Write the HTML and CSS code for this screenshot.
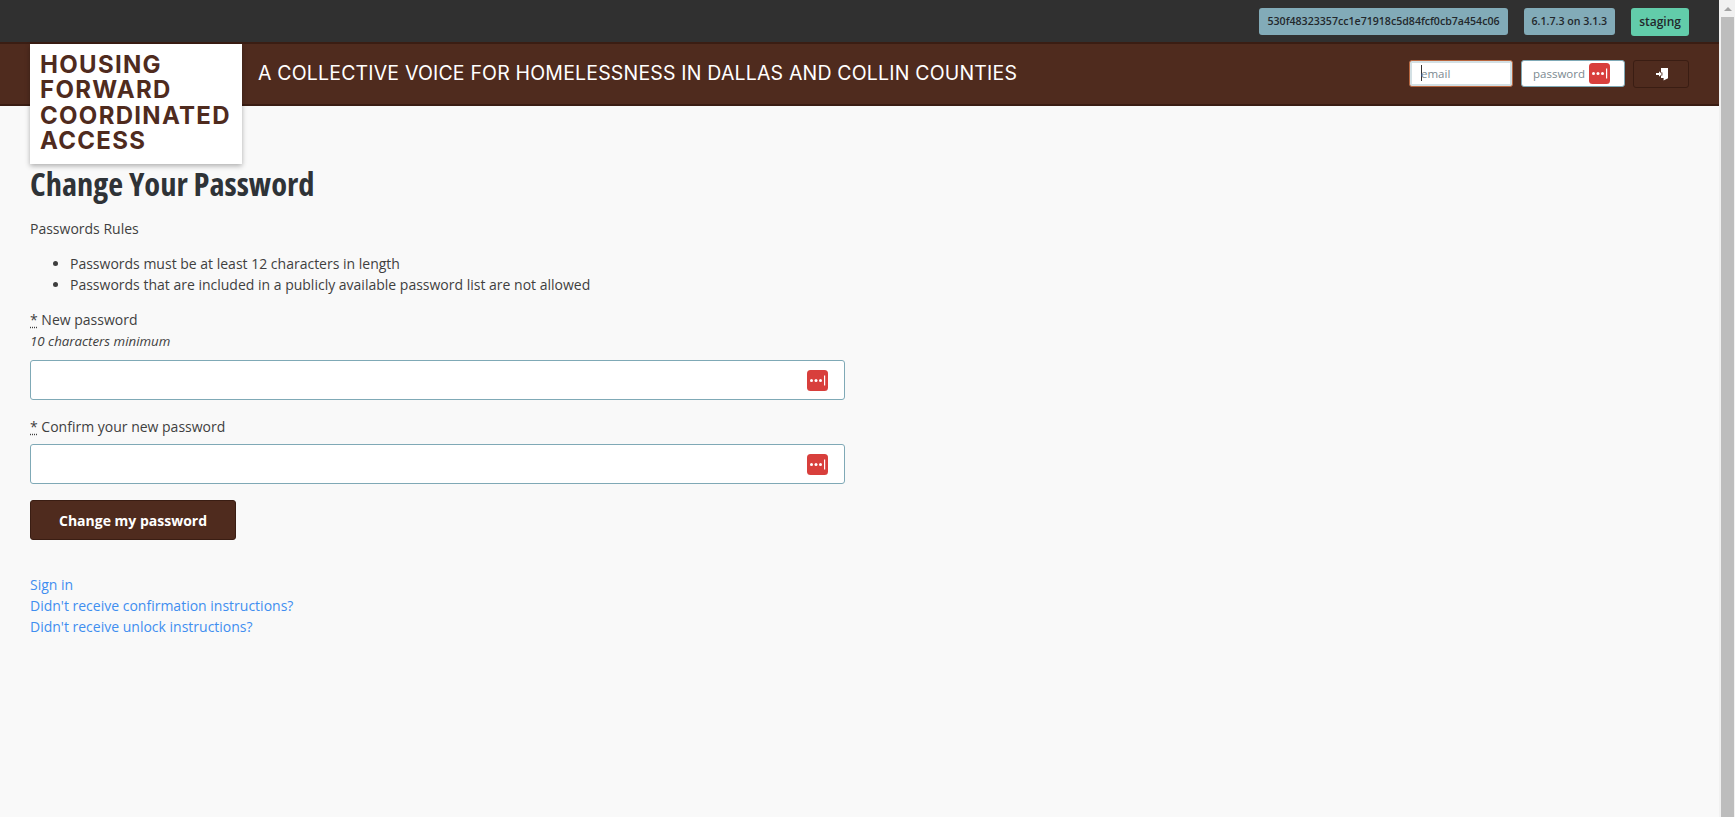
FILE: index.html
```html
<!DOCTYPE html>
<html lang="en">
<head>
<meta charset="utf-8">
<title>Change Your Password</title>
<link rel="stylesheet" href="styles.css">
</head>
<body>
<div class="window">
  <div class="page">
    <div class="topbar">
      <span class="badge badge-info">530f48323357cc1e71918c5d84fcf0cb7a454c06</span>
      <span class="badge badge-info">6.1.7.3 on 3.1.3</span>
      <span class="badge badge-env">staging</span>
    </div>
    <header class="brandbar">
      <div class="logo">HOUSING<br>FORWARD<br>COORDINATED<br>ACCESS</div>
      <div class="tagline">A COLLECTIVE VOICE FOR HOMELESSNESS IN DALLAS AND COLLIN COUNTIES</div>
      <form class="signin">
        <div class="mini-input mini-focus"><span class="caret"></span><span class="ph">email</span></div>
        <div class="mini-input mini-pass">
          <span class="ph">password</span>
          <svg class="lp" viewBox="0 0 21 21"><use href="#lp-icon"/></svg>
        </div>
        <button type="button" class="signin-btn" aria-label="Sign in">
          <svg class="door" viewBox="-1 0 14 14"><path fill="#fff" d="M6 1h7v10.2L8.6 13.5V11H6V8.6h1.4V5.4H6z"/><path fill="#fff" d="M1 6h3V4.2L7 7 4 9.800V8H1z"/></svg>
        </button>
      </form>
    </header>
    <main class="content">
      <h1 class="title">Change Your Password</h1>
      <p class="rules-title">Passwords Rules</p>
      <ul class="rules">
        <li>Passwords must be at least 12 characters in length</li>
        <li>Passwords that are included in a publicly available password list are not allowed</li>
      </ul>
      <form class="pw-form">
        <div class="field">
          <label class="label"><abbr class="req">*</abbr> New password</label>
          <div class="hint">10 characters minimum</div>
          <div class="input"><svg class="lp" viewBox="0 0 21 21"><use href="#lp-icon"/></svg></div>
        </div>
        <div class="field">
          <label class="label"><abbr class="req">*</abbr> Confirm your new password</label>
          <div class="input"><svg class="lp" viewBox="0 0 21 21"><use href="#lp-icon"/></svg></div>
        </div>
        <button type="button" class="submit">Change my password</button>
      </form>
      <nav class="links">
        <a href="#">Sign in</a>
        <a href="#">Didn't receive confirmation instructions?</a>
        <a href="#">Didn't receive unlock instructions?</a>
      </nav>
    </main>
  </div>
  <div class="scrollbar">
    <div class="arrow"></div>
    <div class="thumb"></div>
  </div>
</div>
<svg class="defs" width="0" height="0">
  <symbol id="lp-icon" viewBox="0 0 21 21">
    <rect width="21" height="21" rx="3.500" fill="#d83f3c"/>
    <circle cx="4.500" cy="10.500" r="1.500" fill="#fff"/>
    <circle cx="9" cy="10.500" r="1.500" fill="#fff"/>
    <circle cx="13.500" cy="10.500" r="1.500" fill="#fff"/>
    <rect x="17" y="5.500" width="1.200" height="10" fill="#fff"/>
  </symbol>
</svg>
</body>
</html>
```
FILE: styles.css
```css
* { box-sizing: border-box; }
html, body { margin: 0; height: 100%; overflow: hidden; }
body {
  font-family: "Open Sans", "Liberation Sans", sans-serif;
  font-size: 14px;
  line-height: 21px;
  color: #3f3f3f;
  background: #f9f9f9;
}
.defs { position: absolute; }
.window { display: flex; height: 817px; }
.page { flex: 1; min-width: 0; position: relative; }

.topbar {
  height: 42px;
  background: #303030;
  display: flex;
  justify-content: flex-end;
  align-items: flex-start;
  gap: 16px;
  padding: 8px 30px 0 0;
}
.badge {
  height: 27px;
  padding: 0 8px;
  border-radius: 3px;
  font-size: 10.600px;
  font-weight: 600;
  line-height: 26px;
  color: #22282c;
}
.badge-info { background: #82abb8; }
.badge-env { background: #62ccaa; height: 28px; font-size: 12px; line-height: 28px; }

.brandbar {
  height: 64px;
  background: #4f2b1e;
  border-top: 2px solid #3a1d13;
  border-bottom: 2px solid #3a1d13;
  display: flex;
  align-items: center;
  padding: 0 30px 0 258px;
}
.logo {
  position: absolute;
  left: 30px;
  top: 44px;
  width: 212px;
  height: 120px;
  padding: 8px 0 0 10px;
  background: #fff;
  box-shadow: 0 2px 5px rgba(0,0,0,.3);
  color: #4f2b1e;
  font-family: Inter, "Liberation Sans", sans-serif;
  font-weight: 700;
  font-size: 24px;
  letter-spacing: 1.300px;
  line-height: 25.300px;
  z-index: 2;
}
.tagline {
  font-family: Inter, "Liberation Sans", sans-serif;
  font-size: 19.500px;
  letter-spacing: .18px;
  color: #fff;
  flex: 1;
  margin-top: -2px;
}
.signin { display: flex; align-items: flex-start; gap: 8px; height: 28px; margin-top: -1px; }
.mini-input {
  width: 104px;
  height: 27px;
  background: #fff;
  border-radius: 3px;
  font-size: 11.500px;
  display: flex;
  align-items: center;
}
.mini-focus {
  border: 1px solid #b8663f;
  box-shadow: inset 0 0 0 2px #d3e0e4;
  padding-left: 11px;
}
.mini-pass {
  border: 1px solid #7fa9b6;
  padding-left: 11px;
  gap: 4px;
}
.mini-pass .lp { width: 21px; height: 21px; flex: none; }
.caret { width: 1px; height: 16px; background: #333; margin-right: -1px; flex: none; }
.ph { color: #7b8a90; }
.signin-btn {
  width: 56px;
  height: 28px;
  padding: 0;
  background: #4f2b1e;
  border: 1px solid #3a1d13;
  border-radius: 3px;
  display: flex;
  align-items: center;
  justify-content: center;
}
.door { width: 14px; height: 14px; }

.content { padding: 59px 0 0 30px; }
.title {
  margin: 0;
  font-size: 32.500px;
  line-height: 38px;
  font-weight: 700;
  font-stretch: 75%;
  color: #2f3337;
}
.rules-title { margin: 15px 0 0; }
.rules { margin: 14px 0 0; padding-left: 40px; }
.field { margin-top: 14px; }
.field + .field { margin-top: 16px; }
.pw-form { margin: 0; }
.label { display: block; }
.req {
  text-decoration: underline dotted;
  text-underline-offset: 2px;
}
.hint { font-size: 13.300px; font-style: italic; line-height: 22px; margin-bottom: 8px; }
.label + .input { margin-top: 7px; }
.input {
  width: 815px;
  height: 40px;
  background: #fff;
  border: 1px solid #7fa9b6;
  border-radius: 3px;
  display: flex;
  align-items: center;
  justify-content: flex-end;
  padding-right: 16px;
}
.input .lp { width: 21px; height: 21px; }
.submit {
  display: block;
  width: 206px;
  height: 40px;
  margin-top: 16px;
  background: #4f2b1e;
  border: 1px solid #3a1d13;
  border-radius: 3px;
  color: #fff;
  font: 700 14px "Open Sans", "Liberation Sans", sans-serif;
}
.links { display: flex; flex-direction: column; align-items: flex-start; margin-top: 34px; }
.links a { color: #3f8ef0; text-decoration: none; }

.scrollbar {
  width: 16px;
  flex: none;
  background: #f1f1f1;
  padding: 0 1px 0 2px;
  display: flex;
  flex-direction: column;
}
.arrow {
  height: 17px;
  flex: none;
  position: relative;
}
.arrow::before {
  content: "";
  position: absolute;
  left: 3px;
  top: 7px;
  border-left: 4px solid transparent;
  border-right: 4px solid transparent;
  border-bottom: 4px solid #a3a3a3;
}
.thumb { flex: 1; background: #bdbdbd; }
```
